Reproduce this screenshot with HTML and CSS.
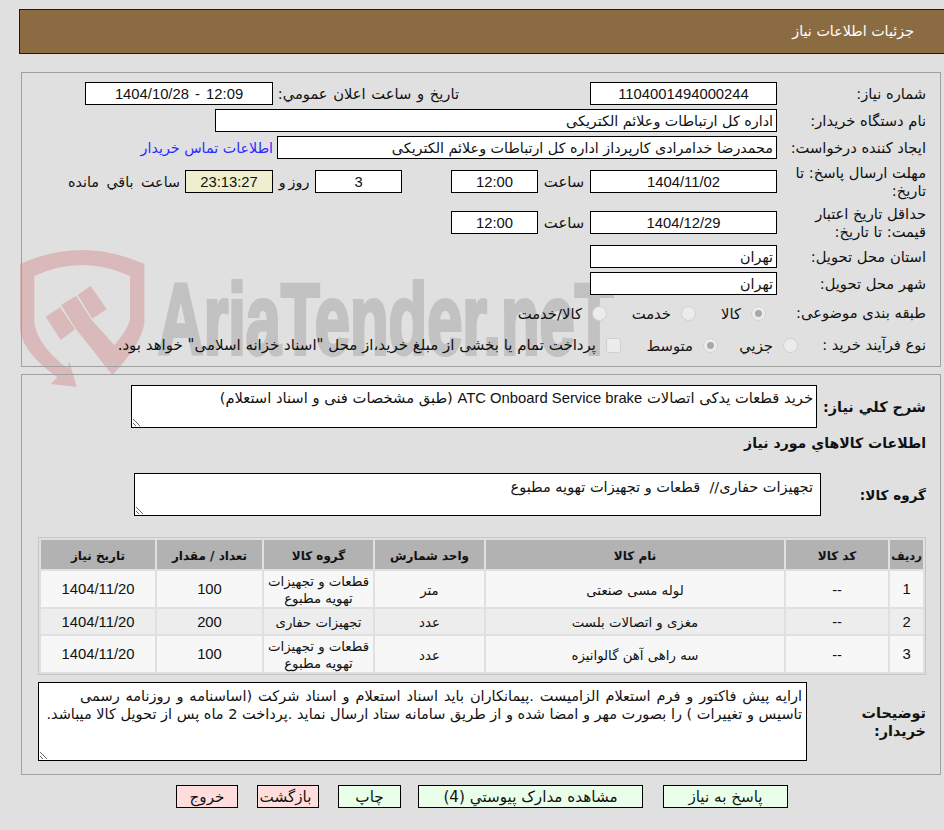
FILE: index.html
```html
<!DOCTYPE html>
<html lang="fa" dir="rtl">
<head>
  <meta charset="UTF-8" />
  <title>جزئیات اطلاعات نیاز</title>
  <link rel="stylesheet" href="styles.css">
</head>
<body>

  <!-- watermark sits behind the panels -->
  <svg class="mark-shield" viewBox="0 0 480 480" aria-hidden="true">
    <path d="M30 72 Q215 -12 403 72 L403 250 Q395 310 308 405 L270 358 Q345 290 360 240 L360 108 Q215 42 73 108 L73 250 Q85 320 172 385 L178 365 L200 440 L122 432 L142 412 Q40 340 30 270 Z"/>
    <path d="M107 230 L150 202 L195 268 L152 300 Z"/>
    <path d="M153 195 L198 168 L245 240 L345 350 L308 405 L198 268 Z"/>
    <path d="M203 165 L242 138 L290 207 L247 236 Z"/>
  </svg>
  <svg class="mark-text" viewBox="0 0 470 120" aria-hidden="true">
    <text x="0" y="82" transform="scale(0.632 1)">AriaTender.neT</text>
  </svg>

  <div class="page-title">جزئیات اطلاعات نیاز</div>

  <div class="panel panel-info">
    <div class="form-grid">
      <div class="lbl">شماره نیاز:</div>
      <div class="field num">1104001494000244</div>
      <div class="lbl-mid">تاریخ و ساعت اعلان عمومي:</div>
      <div class="field num field-pub">1404/10/28 - 12:09</div>

      <div class="lbl">نام دستگاه خریدار:</div>
      <div class="field field-org">اداره کل ارتباطات وعلائم الکتریکی</div>

      <div class="lbl">ایجاد کننده درخواست:</div>
      <div class="creator">
        <div class="field field-creator">محمدرضا خدامرادی کارپرداز اداره کل ارتباطات وعلائم الکتریکی</div>
        <a class="contact" href="#">اطلاعات تماس خریدار</a>
      </div>

      <div class="lbl">مهلت ارسال پاسخ: تا<br>تاریخ:</div>
      <div class="field num">1404/11/02</div>
      <div class="unit">ساعت</div>
      <div class="field num">12:00</div>
      <div></div>
      <div class="field num">3</div>
      <div class="unit unit-days">روز و</div>
      <div class="field num timer">23:13:27</div>
      <div class="remain">ساعت باقي مانده</div>

      <div class="lbl">حداقل تاریخ اعتبار<br>قیمت: تا تاریخ:</div>
      <div class="field num">1404/12/29</div>
      <div class="unit">ساعت</div>
      <div class="field num">12:00</div>

      <div class="lbl">استان محل تحویل:</div>
      <div class="field">تهران</div>

      <div class="lbl">شهر محل تحویل:</div>
      <div class="field">تهران</div>

      <div class="lbl">طبقه بندی موضوعی:</div>
      <div class="options">
        <label class="opt opt-kala"><span class="radio on"></span>کالا</label>
        <label class="opt opt-khedmat"><span class="radio"></span>خدمت</label>
        <label class="opt"><span class="radio"></span>کالا/خدمت</label>
      </div>

      <div class="options purchase">
        <div class="lbl lbl-purchase">نوع فرآیند خرید :</div>
        <label class="opt opt-buy"><span class="radio"></span>جزیي</label>
        <label class="opt opt-buy2"><span class="radio on"></span>متوسط</label>
        <label class="opt opt-pay"><span class="check"></span>پرداخت تمام یا بخشی از مبلغ خرید،از محل "اسناد خزانه اسلامی" خواهد بود.</label>
      </div>
    </div>
  </div>

  <div class="panel panel-goods">
    <div class="memo-row summary-row">
      <div class="lbl-bold">شرح کلي نیاز:</div>
      <div class="memo memo-summary">خرید قطعات یدکی اتصالات <span class="latin">ATC Onboard Service brake</span> (طبق مشخصات فنی و اسناد استعلام)</div>
    </div>

    <h2 class="section">اطلاعات کالاهاي مورد نیاز</h2>

    <div class="memo-row group-row">
      <div class="lbl-bold">گروه کالا:</div>
      <div class="memo memo-group">تجهیزات حفاری//&nbsp; قطعات و تجهیزات تهویه مطبوع</div>
    </div>

    <table class="goods">
      <thead>
        <tr>
          <th class="c-row">ردیف</th>
          <th class="c-code">کد کالا</th>
          <th class="c-name">نام کالا</th>
          <th class="c-unit">واحد شمارش</th>
          <th class="c-group">گروه کالا</th>
          <th class="c-qty">تعداد / مقدار</th>
          <th class="c-date">تاریخ نیاز</th>
        </tr>
      </thead>
      <tbody>
        <tr>
          <td class="num">1</td><td>--</td><td>لوله مسی صنعتی</td><td>متر</td>
          <td>قطعات و تجهیزات تهویه مطبوع</td><td class="num">100</td><td class="num">1404/11/20</td>
        </tr>
        <tr>
          <td class="num">2</td><td>--</td><td>مغزی و اتصالات بلست</td><td>عدد</td>
          <td>تجهیزات حفاری</td><td class="num">200</td><td class="num">1404/11/20</td>
        </tr>
        <tr>
          <td class="num">3</td><td>--</td><td>سه راهی آهن گالوانیزه</td><td>عدد</td>
          <td>قطعات و تجهیزات تهویه مطبوع</td><td class="num">100</td><td class="num">1404/11/20</td>
        </tr>
      </tbody>
    </table>

    <div class="memo-row note-row">
      <div class="lbl-bold lbl-note">توضیحات<br>خریدار:</div>
      <div class="memo memo-note"><span class="note-first">ارایه پیش فاکتور و فرم استعلام الزامیست .پیمانکاران باید اسناد استعلام و اسناد شرکت (اساسنامه و روزنامه رسمی</span><br>تاسیس و تغییرات ) را بصورت مهر و امضا شده و از طریق سامانه ستاد ارسال نماید .پرداخت 2 ماه پس از تحویل کالا میباشد.</div>
    </div>
  </div>

  <div class="actions">
    <button class="btn btn-go btn-reply">پاسخ به نیاز</button>
    <button class="btn btn-go btn-docs">مشاهده مدارک پیوستي (4)</button>
    <button class="btn btn-go btn-print">چاپ</button>
    <button class="btn btn-stop btn-back">بازگشت</button>
    <button class="btn btn-stop">خروج</button>
  </div>

</body>
</html>
```

FILE: styles.css
```css
:root {
  --bg: #e0e0e0;
  --title: #8b6c42;
  --line: #a0a0a0;
  --ink: #111111;
}

body {
  position: relative;
  margin: 0;
  height: 830px;
  overflow: hidden;
  background-color: var(--bg);
  color: var(--ink);
  font-family: "DejaVu Sans", sans-serif;
  font-size: 14.3px;
}

.mark-shield {
  position: absolute;
  left: 10px;
  top: 240px;
  width: 160px;
  height: 160px;
  fill: #d9b9ba;
}

.mark-text {
  position: absolute;
  left: 158px;
  top: 272px;
  width: 470px;
  height: 120px;
  direction: ltr;
  fill: #c2c2c2;
  stroke: #c2c2c2;
  stroke-width: 4px;
  font-family: "Liberation Sans", sans-serif;
  font-weight: bold;
  font-size: 100px;
}

.page-title {
  position: relative;
  box-sizing: border-box;
  height: 45px;
  margin: 9px 0 0 19px;
  padding-right: 30px;
  border: 1px solid #1a1a1a;
  border-right: none;
  background-color: var(--title);
  color: #ffffff;
  font-size: 14.3px;
  line-height: 43px;
}

.panel {
  position: relative;
  box-sizing: border-box;
  width: 920px;
  margin-right: 3px;
  border: 1px solid var(--line);
}

.panel-info {
  height: 295px;
  margin-top: 18px;
  padding: 9px 14px 0 0;
}

.panel-goods {
  height: 401px;
  margin-top: 7px;
  padding: 10px 14px 0 0;
}

.form-grid {
  display: grid;
  grid-template-columns: 149px 187px 52px 87px 49px 87px 42px 88px 1fr;
  grid-template-rows: 23px 23px 23px 37px 37px 23px 23px 28px 28px;
  row-gap: 4px;
  align-items: center;
}

.lbl {
  grid-column: 1;
  font-size: 14.7px;
  line-height: 18px;
  white-space: nowrap;
}

.lbl-mid {
  grid-column: 3 / 8;
  padding-right: 131px;
  font-size: 14.7px;
  word-spacing: 1px;
  white-space: nowrap;
}

.field {
  box-sizing: border-box;
  height: 23px;
  padding: 0 3px;
  border: 1px solid #000000;
  background-color: #ffffff;
  line-height: 22px;
  white-space: nowrap;
  overflow: hidden;
}

.num {
  font-family: "Liberation Sans", sans-serif;
  font-size: 14.8px;
}

.field.num {
  text-align: center;
}

.field-pub {
  grid-column: 8 / -1;
  justify-self: start;
  width: 188px;
  direction: ltr;
  word-spacing: 2px;
}

.field-org {
  grid-column: 2 / -1;
  width: 562px;
}

.creator {
  grid-column: 2 / -1;
  display: flex;
  align-items: center;
  gap: 4px;
}

.field-creator {
  width: 500px;
}

.contact {
  color: #2a2aff;
  text-decoration: none;
  white-space: nowrap;
}

.unit {
  font-size: 14.8px;
  text-align: center;
  white-space: nowrap;
}

.unit-days {
  font-size: 14.3px;
  word-spacing: -1.5px;
}

.timer {
  background-color: #efefd0;
}

.remain {
  padding-right: 5px;
  word-spacing: 3px;
  white-space: nowrap;
}

.options {
  grid-column: 2 / -1;
  display: flex;
  align-items: center;
  padding-right: 11px;
}

.purchase {
  grid-column: 1 / -1;
  padding-right: 0;
}

.lbl-purchase {
  width: 128px;
}

.opt {
  display: flex;
  align-items: center;
  gap: 10px;
  font-size: 14.8px;
  white-space: nowrap;
}

.opt-kala {
  width: 70px;
}

.opt-khedmat {
  width: 89px;
}

.opt-buy {
  width: 80px;
}

.opt-buy2 {
  width: 97px;
}

.opt-pay {
  font-size: 15px;
}

.radio,
.check {
  box-sizing: border-box;
  flex: none;
  width: 15px;
  height: 15px;
  border: 1px solid #d0d0d0;
  border-radius: 50%;
  background-color: #ececec;
}

.radio.on {
  border: 4px solid #ececec;
  outline: 1px solid #d0d0d0;
  outline-offset: -1px;
  background-color: #a8a8a8;
}

.check {
  border-radius: 3px;
}

.memo-row {
  display: flex;
}

.lbl-bold,
.section {
  font-weight: bold;
  font-size: 14.4px;
  white-space: nowrap;
}

.memo {
  box-sizing: border-box;
  padding: 3px 3px;
  border: 1px solid #000000;
  background-color: #ffffff;
  font-size: 14.5px;
  line-height: 18px;
  resize: both;
  overflow: hidden;
}

.latin {
  font-family: "Liberation Sans", sans-serif;
  font-size: 14.8px;
}

.summary-row {
  align-items: center;
  gap: 7px;
}

.summary-row .lbl-bold {
  width: 102px;
}

.memo-summary {
  width: 686px;
  height: 43px;
  font-size: 14.7px;
}

.section {
  margin: 6px 0 0;
  height: 39px;
  font-size: 14.1px;
  line-height: 18px;
}

.group-row {
  align-items: center;
  justify-content: flex-start;
}

.group-row .lbl-bold {
  width: 105px;
  font-size: 13.6px;
}

.memo-group {
  width: 687px;
  height: 43px;
  padding: 4px 7px;
}

.goods {
  width: 888px;
  margin: 21px 0 0;
  border: 1px solid #c6c6c6;
  border-spacing: 2px;
  table-layout: fixed;
}

.goods th,
.goods td {
  box-sizing: border-box;
  padding: 2px 0 0;
  text-align: center;
}

.goods th {
  height: 29px;
  background-color: #b2b2b2;
  font-size: 12px;
}

.goods th.c-row {
  font-size: 11.5px;
}

.goods td {
  height: 36px;
  background-color: #f7f7f7;
  font-size: 13.3px;
  line-height: 17px;
}

.goods td.num {
  padding-top: 1px;
  font-size: 14.8px;
}

.goods tbody tr:nth-child(2) td {
  height: 25px;
  background-color: #ededed;
}

.c-row { width: 33px; }
.c-code { width: 102px; }
.c-name { width: 298px; }
.c-unit { width: 109px; }
.c-group { width: 109px; }
.c-qty { width: 105px; }
.c-date { width: 114px; }

.note-row {
  align-items: center;
  margin-top: 7px;
}

.lbl-note {
  width: 119px;
  line-height: 18px;
}

.memo-note {
  width: 769px;
  height: 79px;
  padding: 4px 4px;
  white-space: nowrap;
}

.note-first {
  word-spacing: 1.3px;
}

.actions {
  position: relative;
  display: flex;
  gap: 19px;
  margin-top: 10px;
  padding-right: 156px;
}

.btn {
  box-sizing: border-box;
  width: 62px;
  height: 23px;
  padding: 0;
  border: 1px solid #000000;
  color: var(--ink);
  font-family: inherit;
  font-size: 15.2px;
}

.btn-go {
  background-color: #eaffea;
}

.btn-stop {
  background-color: #ffdddd;
}

.btn-reply {
  width: 125px;
}

.btn-docs {
  width: 225px;
  margin-right: 1px;
}

.btn-print {
  width: 63px;
  margin-right: -2px;
}

.btn-back {
  padding-right: 5px;
}
```
